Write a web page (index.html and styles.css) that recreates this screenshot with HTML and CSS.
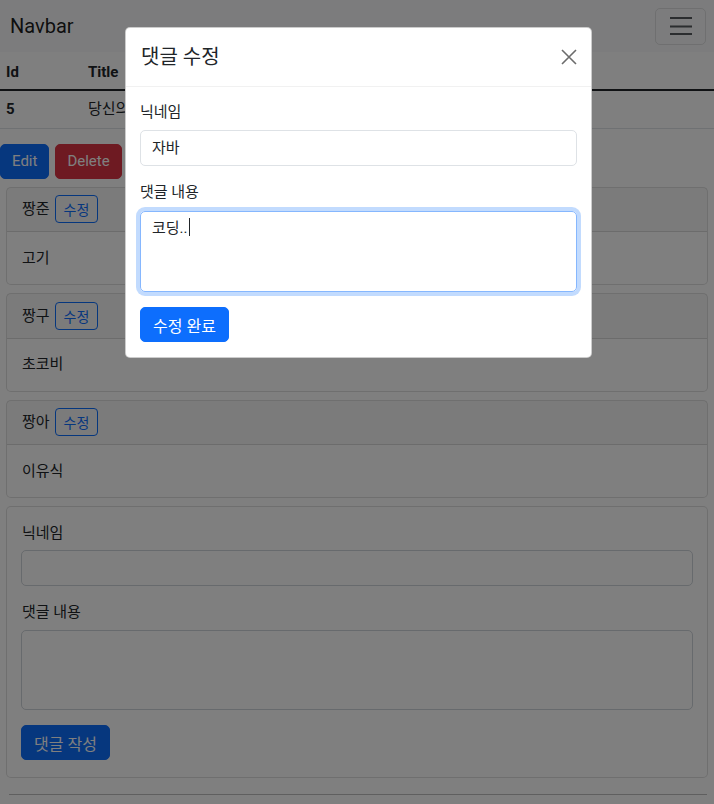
FILE: index.html
```html
<!DOCTYPE html>
<html lang="ko">
<head>
<meta charset="utf-8">
<title>Board</title>
<link rel="stylesheet" href="styles.css">
</head>
<body>
<nav class="navbar">
  <span class="brand">Navbar</span>
  <button class="toggler" type="button" aria-label="menu">
    <svg width="22" height="18" viewBox="0 0 22 18"><path d="M0 1h22M0 9.5h22M0 17h22" stroke="#212529" stroke-opacity=".75" stroke-width="2"/></svg>
  </button>
</nav>

<table class="board">
  <thead>
    <tr><th class="c-id">Id</th><th>Title</th></tr>
  </thead>
  <tbody>
    <tr><td class="c-id bold">5</td><td>당신의</td></tr>
  </tbody>
</table>

<div class="actions">
  <button class="btn btn-primary">Edit</button>
  <button class="btn btn-danger">Delete</button>
</div>

<div class="comments">
  <div class="card">
    <div class="card-header">짱준 <button class="btn-sm">수정</button></div>
    <div class="card-body">고기</div>
  </div>
  <div class="card">
    <div class="card-header">짱구 <button class="btn-sm">수정</button></div>
    <div class="card-body">초코비</div>
  </div>
  <div class="card">
    <div class="card-header">짱아 <button class="btn-sm">수정</button></div>
    <div class="card-body">이유식</div>
  </div>
  <div class="card form-card">
    <label class="label">닉네임</label>
    <div class="input"></div>
    <label class="label label2">댓글 내용</label>
    <div class="textarea"></div>
    <button class="btn btn-primary btn-ko">댓글 작성</button>
  </div>
  <hr class="rule">
</div>

<div class="backdrop"></div>

<div class="modal">
  <div class="modal-header">
    <h5 class="modal-title">댓글 수정</h5>
    <button class="btn-close" aria-label="close">
      <svg width="16" height="16" viewBox="0 0 16 16"><path d="M1 1L15 15M15 1L1 15" stroke="#6c6c6c" stroke-width="1.6"/></svg>
    </button>
  </div>
  <div class="modal-body">
    <label class="m-label">닉네임</label>
    <div class="m-input">자바</div>
    <label class="m-label m-label2">댓글 내용</label>
    <div class="m-textarea">코딩..<span class="caret"></span></div>
    <button class="btn btn-primary btn-ko m-submit">수정 완료</button>
  </div>
</div>
</body>
</html>
```
FILE: styles.css
```css
* { box-sizing: border-box; }
html, body { margin: 0; padding: 0; }
body {
  font-family: Roboto, "Noto Sans CJK KR", sans-serif;
  font-size: 16px;
  line-height: 1.5;
  color: #212529;
  background: #fff;
  width: 714px;
  height: 804px;
  overflow: hidden;
  position: relative;
}
button { font-family: inherit; }

.navbar {
  height: 52px;
  background: #f8f9fa;
  display: flex;
  align-items: center;
  justify-content: space-between;
  padding: 0 8px 0 10px;
}
.brand { font-size: 20px; color: rgba(0,0,0,.9); }
.toggler {
  width: 51px;
  height: 37px;
  border: 1px solid rgba(0,0,0,.1);
  border-radius: 5px;
  background: transparent;
  display: flex;
  align-items: center;
  justify-content: center;
  padding: 0;
}

.board { width: 100%; border-collapse: collapse; }
.board th, .board td { text-align: left; padding: 0 6px; font-size: 15px; }
.board th { height: 38px; font-weight: 700; border-bottom: 2px solid #212529; padding-top: 3px; }
.board td { height: 38px; border-bottom: 1px solid #dee2e6; }
.c-id { width: 82px; }
.bold { font-weight: 700; }

.actions { display: flex; gap: 6px; margin-top: 15px; }
.btn {
  height: 35px;
  border: 1px solid transparent;
  border-radius: 5px;
  padding: 0 11px;
  font-size: 15px;
  color: #fff;
}
.btn-ko { font-size: 16px; padding: 0 12px; }
.btn-primary { background: #0d6efd; border-color: #0d6efd; }
.btn-danger { background: #dc3545; border-color: #dc3545; }

.comments { padding: 8px 6px 0 6px; }
.card {
  border: 1px solid rgba(0,0,0,.125);
  border-radius: 5px;
  margin-bottom: 8px;
  background: #fff;
}
.card-header {
  height: 44.5px;
  background: rgba(0,0,0,.03);
  border-bottom: 1px solid rgba(0,0,0,.125);
  padding: 0 15px;
  display: flex;
  align-items: center;
  gap: 5px;
  font-size: 15px;
}
.btn-sm {
  height: 28px;
  padding: 0 8px;
  border: 1px solid #0d6efd;
  border-radius: 4px;
  background: transparent;
  color: #0d6efd;
  font-size: 14px;
}
.card-body {
  height: 52px;
  padding: 0 15px;
  display: flex;
  align-items: center;
  font-size: 15px;
}
.form-card {
  height: 272px;
  padding: 14px 14px 0 14px;
  display: flex;
  flex-direction: column;
  align-items: flex-start;
}
.label { font-size: 15px; height: 24px; line-height: 24px; margin-left: 1px; }
.label2 { margin-top: 14px; }
.input {
  width: 100%;
  height: 36px;
  margin-top: 5px;
  border: 1px solid #ced4da;
  border-radius: 5px;
}
.textarea {
  width: 100%;
  height: 80px;
  margin-top: 6px;
  border: 1px solid #ced4da;
  border-radius: 5px;
}
.form-card .btn { margin-top: 15px; }
.rule {
  margin: 16px 1px 0 3px;
  border: 0;
  border-top: 1px solid rgba(0,0,0,.25);
}

.backdrop {
  position: absolute;
  inset: 0;
  background: rgba(0,0,0,.5);
}

.modal {
  position: absolute;
  left: 125px;
  top: 27px;
  width: 467px;
  height: 331px;
  background: #fff;
  border-radius: 5px;
  border: 1px solid rgba(0,0,0,.2);
}
.modal-header {
  height: 59px;
  display: flex;
  align-items: center;
  justify-content: space-between;
  padding: 0 10px 0 15px;
  border-bottom: 1px solid #f1f1f1;
}
.modal-title { margin: 0; font-size: 20px; font-weight: 400; color: #212529; }
.btn-close {
  width: 24px;
  height: 24px;
  border: 0;
  background: transparent;
  padding: 0;
  display: flex;
  align-items: center;
  justify-content: center;
}
.modal-body {
  padding: 13px 14px 0 14px;
  display: flex;
  flex-direction: column;
  align-items: flex-start;
}
.m-label { font-size: 15px; height: 24px; line-height: 24px; }
.m-label2 { margin-top: 14px; }
.m-input {
  width: 100%;
  height: 36px;
  margin-top: 6px;
  border: 1px solid #dee2e6;
  border-radius: 5px;
  padding: 0 11px;
  font-size: 15px;
  line-height: 34px;
}
.m-textarea {
  width: 100%;
  height: 81px;
  margin-top: 7px;
  border: 1px solid #86b7fe;
  border-radius: 5px;
  box-shadow: 0 0 0 4px rgba(13,110,253,.25);
  padding: 4px 11px;
  font-size: 15px;
  line-height: 24px;
}
.caret {
  display: inline-block;
  width: 1px;
  height: 18px;
  background: #212529;
  vertical-align: -3px;
  margin-left: 1px;
}
.m-submit { margin-top: 15px; }
```
